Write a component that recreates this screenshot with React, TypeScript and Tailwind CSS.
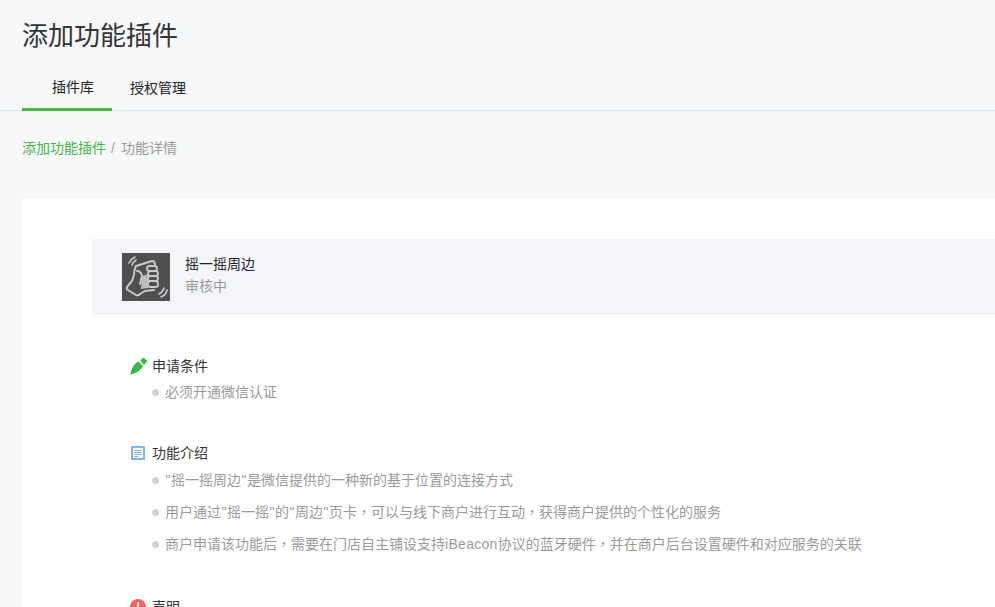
import React from "react";

const font = { fontFamily: '"Liberation Sans", "Noto Sans CJK SC", sans-serif' };

function Punct({ text }: { text: string }) {
  const parts = text.split(/([，"]|iBeacon)/);
  return (
    <>
      {parts.map((p, i) => {
        if (p === "，") {
          return (
            <span key={i} className="[font-family:'Noto_Sans_CJK_TC',sans-serif]">
              ，
            </span>
          );
        }
        if (p === '"') {
          return (
            <span key={i} className="mx-[0.5px]">
              "
            </span>
          );
        }
        if (p === "iBeacon") {
          return (
            <span key={i} className="tracking-[0.3px]">
              iBeacon
            </span>
          );
        }
        return <React.Fragment key={i}>{p}</React.Fragment>;
      })}
    </>
  );
}

function Bullet({ children }: { children: string }) {
  return (
    <li className="flex h-8 items-center text-[14px] text-[#9a9a9a]">
      <span className="mr-[6px] h-[7px] w-[7px] rounded-full bg-[#d4d4d4]" />
      <span>
        <Punct text={children} />
      </span>
    </li>
  );
}

function Section({
  icon,
  title,
  items,
  listClass = "-mt-[3px] pl-[22px]",
  sectionClass = "mb-[32px]",
}: {
  icon: React.ReactNode;
  title: string;
  items: string[];
  listClass?: string;
  sectionClass?: string;
}) {
  return (
    <section className={sectionClass}>
      <div className="flex h-[26px] items-center text-[14px] text-[#353535]">
        <span className="flex w-[22px] justify-start">{icon}</span>
        <span>{title}</span>
      </div>
      {items.length > 0 && (
        <ul className={listClass}>
          {items.map((t) => (
            <Bullet key={t}>{t}</Bullet>
          ))}
        </ul>
      )}
    </section>
  );
}

const Carrot = (
  <svg width="18" height="18" viewBox="0 0 18 18">
    <path d="M0.5 17.5 C1 12 3.5 7 8.5 4.5 L13 9 C11 13 6.5 16.5 0.5 17.5 Z" fill="#3fb64a" />
    <path d="M10 3.5 L13.5 0.5 L17.5 4 L14 8 Z" fill="#3fb64a" />
    <path d="M9.5 4.5 L13 8" stroke="#e8f7e9" strokeWidth="0.6" />
  </svg>
);

const Doc = (
  <svg width="16" height="16" viewBox="0 0 16 16">
    <rect x="2" y="2" width="12" height="12" fill="#fff" stroke="#7ab8e8" strokeWidth="2" />
    <path d="M4.5 5.5h7M4.5 7.5h7M4.5 9.5h7M4.5 11.5h4" stroke="#7ab8e8" strokeWidth="1" />
  </svg>
);

const Warn = (
  <svg width="16" height="16" viewBox="0 0 16 16">
    <circle cx="8" cy="8" r="8" fill="#f76260" />
    <rect x="7" y="3" width="2" height="6.5" fill="#fff" />
    <rect x="7" y="11" width="2" height="2" fill="#fff" />
  </svg>
);

const Fist = (
  <div className="flex h-12 w-12 items-center justify-center bg-[#4f4f4f]">
    <svg width="48" height="48" viewBox="0 0 48 48" fill="none" stroke="#c9c9c9" strokeLinecap="round" strokeLinejoin="round">
      <path d="M14 13 L30 8 Q33 8 33 12" strokeWidth="2" />
      <path d="M14 13 Q12 17 12 22 L10 28 L5 34 Q4 36 6 37 L14 42 Q16 43 18 41 L23 38 L32 37" strokeWidth="2" />
      <rect x="25" y="13" width="10" height="5" rx="2.4" strokeWidth="1.8" />
      <rect x="26" y="18" width="10" height="5" rx="2.4" strokeWidth="1.8" />
      <rect x="26" y="23" width="10" height="5" rx="2.4" strokeWidth="1.8" />
      <rect x="26" y="28" width="10" height="6" rx="2.6" strokeWidth="1.8" />
      <path d="M15 18 Q19 18 20 23 L18 31" strokeWidth="2" />
      <path d="M20 23 L26 21 L26 35 L19 36 Z" fill="#bdbdbd" stroke="none" />
      <path d="M7 10 Q9 6 13 4 M10 12 Q11 9 14 7 M37 41 Q41 39 42 35 M39 44 Q44 42 45 37" strokeWidth="1.6" />
    </svg>
  </div>
);

export default function App() {
  return (
    <div className="h-[607px] overflow-hidden bg-[#f6f8f9]" style={font}>
      <header className="px-[22px] pt-[13px]">
        <h1 className="h-[46px] text-[26px] leading-[46px] font-normal text-[#353535]">添加功能插件</h1>
      </header>
      <nav className="mt-[7px] flex h-[45px] border-b border-[#e4e8eb] pl-[22px] text-[14px] text-[#222]">
        <div className="flex h-[45px] w-[90px] items-center justify-center border-b-[3px] border-[#44b549] pl-[12px]">插件库</div>
        <div className="flex h-[44px] items-center pl-[18px]">授权管理</div>
      </nav>
      <div className="mt-[26px] px-[22px] text-[14px] leading-[22px] text-[#9a9a9a]">
        <span className="text-[#44b549]">添加功能插件</span>
        <span className="mr-[6px] ml-[5px]">/</span>
        <span>功能详情</span>
      </div>
      <main className="mt-[40px] ml-[22px] bg-white pt-[40px] pl-[70px]">
        <div className="flex h-[76px] items-center bg-[#f4f5f9] pl-[30px]">
          {Fist}
          <div className="ml-[15px] pb-[4px] text-[14px] leading-[22px]">
            <div className="text-[#222]">摇一摇周边</div>
            <div className="text-[#9a9a9a]">审核中</div>
          </div>
        </div>
        <div className="pt-[38px] pl-[38px]">
          <Section icon={Carrot} title="申请条件" items={["必须开通微信认证"]} />
          <Section
            icon={Doc}
            title="功能介绍"
            listClass="-mt-[2px] pl-[22px]"
            sectionClass="mb-[34px]"
            items={[
              '"摇一摇周边"是微信提供的一种新的基于位置的连接方式',
              '用户通过"摇一摇"的"周边"页卡，可以与线下商户进行互动，获得商户提供的个性化的服务',
              "商户申请该功能后，需要在门店自主铺设支持iBeacon协议的蓝牙硬件，并在商户后台设置硬件和对应服务的关联",
            ]}
          />
          <Section icon={Warn} title="声明" items={[]} />
        </div>
      </main>
    </div>
  );
}
